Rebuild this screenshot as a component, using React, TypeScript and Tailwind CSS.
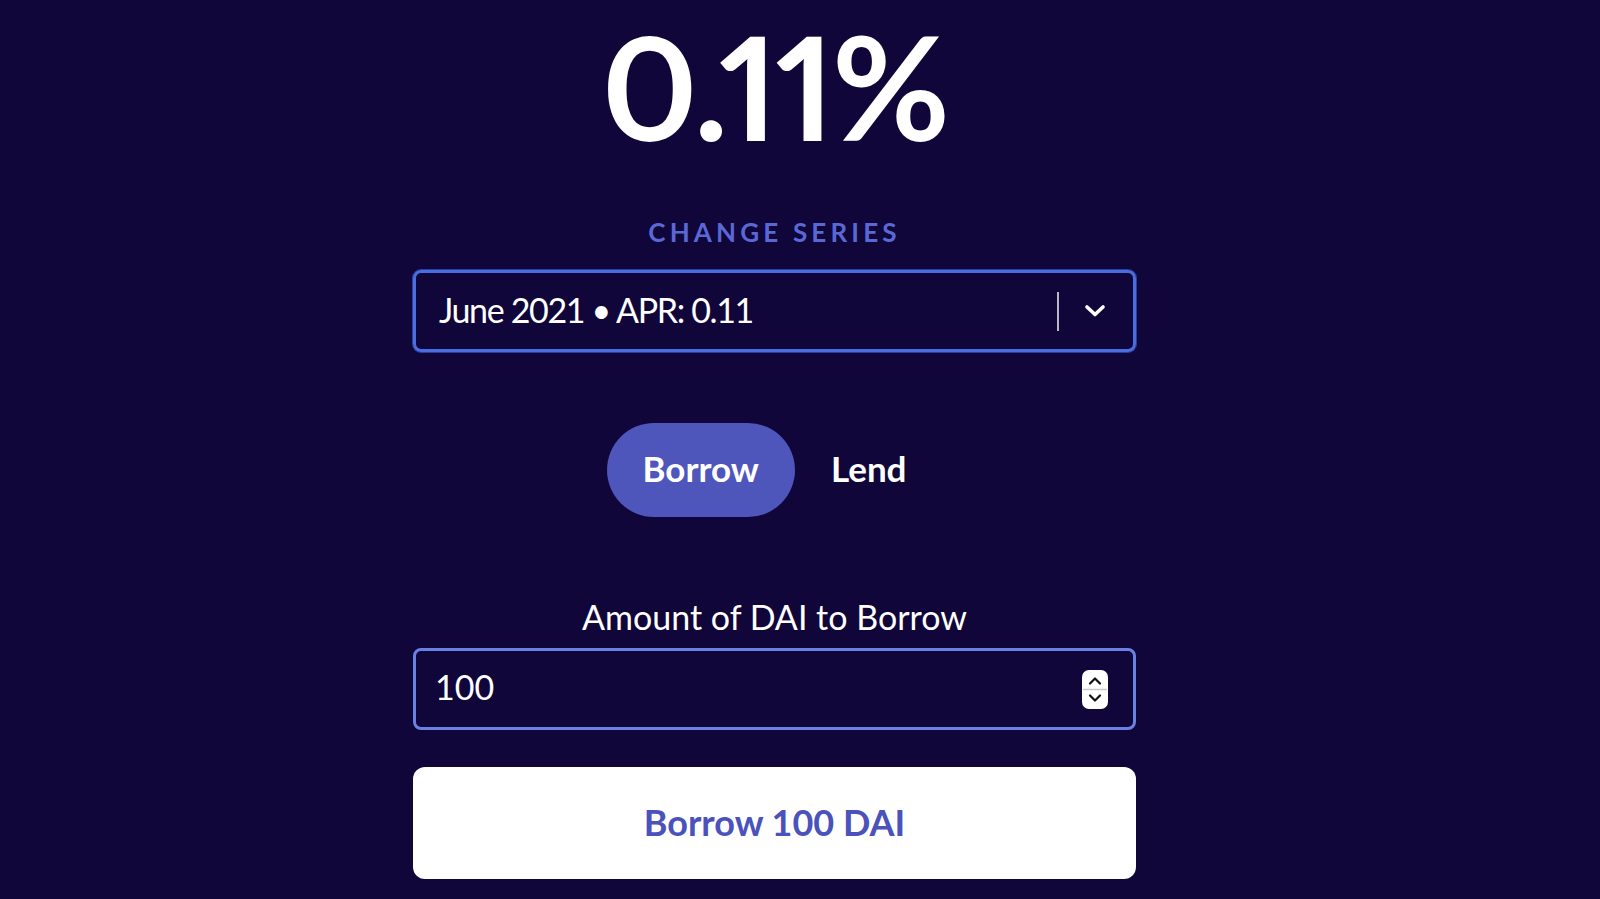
import React, { useState } from "react";

function Chevron() {
  return (
    <svg width="24" height="14" viewBox="0 0 24 14" fill="none">
      <path d="M4 3l8 7.5 8-7.5" stroke="white" strokeWidth="3.6" strokeLinecap="round" strokeLinejoin="round" />
    </svg>
  );
}

function Spinner() {
  return (
    <svg width="26" height="39" viewBox="0 0 26 39">
      <rect x="0" y="0" width="26" height="39" rx="7" fill="white" />
      <line x1="1" y1="19.5" x2="25" y2="19.5" stroke="#c9c9c9" strokeWidth="1.5" />
      <path d="M8 13.5l5-5 5 5" stroke="#111" strokeWidth="2.2" fill="none" strokeLinecap="round" strokeLinejoin="round" />
      <path d="M8 25.5l5 5 5-5" stroke="#111" strokeWidth="2.2" fill="none" strokeLinecap="round" strokeLinejoin="round" />
    </svg>
  );
}

export default function App() {
  const [mode, setMode] = useState<"borrow" | "lend">("borrow");
  const [amount, setAmount] = useState("100");

  return (
    <div className="min-h-[899px] w-full bg-[#10063a] font-['Lato',sans-serif] text-white">
      <div className="flex justify-center pr-[51px]">
        <div className="flex w-[723px] flex-col items-center">
          <h1 className="mt-[14px] text-[144px] font-bold leading-none tracking-[-0.02em] proportional-nums">0.11%</h1>

          <p className="mt-[61px] text-[26px] font-bold leading-none tracking-[0.16em] text-[#5a68d6]">
            CHANGE SERIES
          </p>

          <div className="mt-[25px] flex h-[82px] w-full items-center rounded-lg border-[3px] border-[#4a6ee0] pl-[23px] pr-[26px] shadow-[0_0_0_1px_#2c3f9a]">
            <span className="flex-1 pb-[2px] text-[34px] leading-none tracking-[-0.04em]">June 2021 • APR: 0.11</span>
            <span className="h-[39px] w-[2px] bg-[#b9b9c4]" />
            <span className="ml-[24px]">
              <Chevron />
            </span>
          </div>

          <div className="mt-[71px] flex">
            <button
              onClick={() => setMode("borrow")}
              className={
                "h-[94px] rounded-full px-[36px] pb-[3px] text-[35px] font-bold leading-none " +
                (mode === "borrow" ? "bg-[#4e55bb]" : "bg-transparent")
              }
            >
              Borrow
            </button>
            <button
              onClick={() => setMode("lend")}
              className={
                "h-[94px] rounded-full px-[36px] pb-[3px] text-[35px] font-bold leading-none " +
                (mode === "lend" ? "bg-[#4e55bb]" : "bg-transparent")
              }
            >
              Lend
            </button>
          </div>

          <label className="mt-[83px] text-[34px] leading-none">
            Amount of DAI to {mode === "borrow" ? "Borrow" : "Lend"}
          </label>

          <div className="mt-[14px] flex h-[82px] w-full items-center rounded-lg border-[3px] border-[#6a80e2] pl-[19px] pr-[25px]">
            <input
              value={amount}
              onChange={(e) => setAmount(e.target.value)}
              className="flex-1 bg-transparent pb-[5px] text-[34px] leading-none text-white outline-none"
            />
            <Spinner />
          </div>

          <button className="mt-[37px] flex h-[112px] w-full items-center justify-center rounded-xl bg-white pb-[3px] text-[36px] font-bold leading-none text-[#4b52bb]">
            {mode === "borrow" ? "Borrow" : "Lend"} {amount} DAI
          </button>
        </div>
      </div>
    </div>
  );
}
